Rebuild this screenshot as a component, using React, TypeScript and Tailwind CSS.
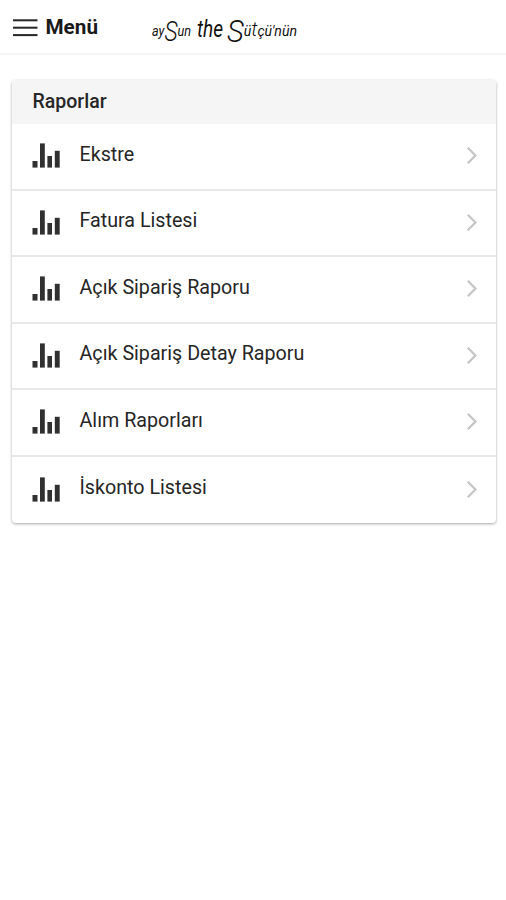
const reports = [
    "Ekstre",
    "Fatura Listesi",
    "Açık Sipariş Raporu",
    "Açık Sipariş Detay Raporu",
    "Alım Raporları",
    "İskonto Listesi",
]

function MenuIcon() {
    return (
        <svg width="25" height="18" viewBox="0 0 25 18" fill="#262626">
            <rect x="0" y="0.3" width="24.5" height="2" />
            <rect x="0" y="7.7" width="24.5" height="2" />
            <rect x="0" y="15.1" width="24.5" height="2" />
        </svg>
    )
}

// Handwritten-looking wordmark: each word is one run with an oversized S that drops below the line
function Logo() {
    return (
        <svg
            width="150"
            height="42"
            viewBox="0 0 150 42"
            className="overflow-visible font-['Roboto',sans-serif] italic"
            fill="#111111"
        >
            <text x="1" y="27" fontSize="15" textLength="39" lengthAdjust="spacingAndGlyphs">
                ay<tspan fontSize="27" dy="5" className="font-light">S</tspan><tspan dy="-5">un</tspan>
            </text>
            <text x="46" y="28" fontSize="24" textLength="26" lengthAdjust="spacingAndGlyphs">
                the
            </text>
            <text x="76" y="27" fontSize="15" textLength="70" lengthAdjust="spacingAndGlyphs">
                <tspan fontSize="31" dy="6" className="font-light">S</tspan><tspan dy="-6">ü</tspan><tspan fontSize="21" className="font-light">t</tspan>çü'nün
            </text>
        </svg>
    )
}

function ChartIcon() {
    return (
        <svg width="28" height="26" viewBox="0 0 28 26" fill="#303030">
            <rect x="0.5" y="18" width="5" height="6.6" />
            <rect x="8" y="0.4" width="4.8" height="24.2" />
            <rect x="15.4" y="13" width="4.6" height="11.6" />
            <rect x="22.8" y="7.8" width="4.9" height="16.8" />
        </svg>
    )
}

function ChevronIcon() {
    return (
        <svg width="12" height="18" viewBox="0 0 12 18" fill="none" stroke="#c6c6c6" strokeWidth="2.3">
            <path d="M1.8 0.8 9.4 8.5 1.8 16.2" />
        </svg>
    )
}

export default function App() {
    return (
        <div className="min-h-screen bg-white font-['Roboto',sans-serif] text-[#262626]">
            <header className="flex h-[55px] items-start border-b-2 border-[#f5f5f5] pl-3">
                <button className="flex h-[55px] items-center gap-[7.5px] pl-px text-[20.7px] font-bold text-[#1a1a1a]">
                    <MenuIcon />
                    <span>Menü</span>
                </button>
                <div className="ml-[53px] mt-[9px]">
                    <Logo />
                </div>
            </header>

            <main className="px-3 pt-[24.5px]">
                <section className="w-[484px] overflow-hidden rounded-[4px] bg-white shadow-[0_1px_3px_rgba(0,0,0,0.35)]">
                    <h2 className="flex h-[44.5px] items-center bg-[#f5f5f5] pl-[20.5px] text-[19.5px] font-medium">
                        Raporlar
                    </h2>
                    <ul>
                        {reports.map((report) => (
                            <li
                                key={report}
                                className="flex h-[66.5px] items-center border-b-2 border-[#e9e9e9] pl-5 pr-[18px] last:border-b-0"
                            >
                                <ChartIcon />
                                <span className="ml-[19.5px] flex-1 pb-[3px] text-[19.7px]">{report}</span>
                                <ChevronIcon />
                            </li>
                        ))}
                    </ul>
                </section>
            </main>
        </div>
    )
}
